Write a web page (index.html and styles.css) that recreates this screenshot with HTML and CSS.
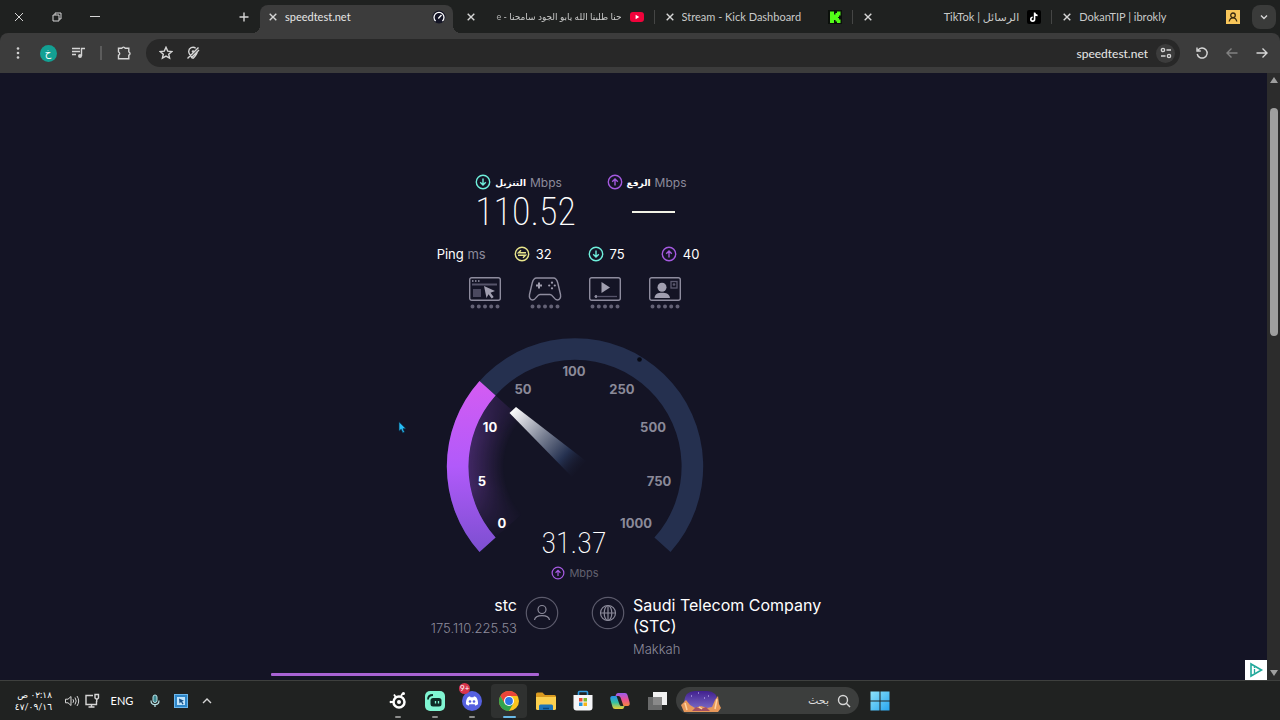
FILE: index.html
```html
<!DOCTYPE html>
<html lang="ar">
<head>
<meta charset="utf-8">
<title>speedtest.net</title>
<link rel="stylesheet" href="styles.css">
</head>
<body>
<header class="tabstrip">
  <div class="window-controls">
    <button class="win-btn" aria-label="Close"><svg width="10" height="10" viewBox="0 0 10 10"><path class="ln" d="M1 1l8 8M9 1l-8 8"/></svg></button>
    <button class="win-btn" aria-label="Restore"><svg width="10" height="10" viewBox="0 0 10 10"><path class="ln" d="M1 3h6v6H1zM3 3V1h6v6H7"/></svg></button>
    <button class="win-btn" aria-label="Minimize"><svg width="10" height="10" viewBox="0 0 10 10"><path class="ln" d="M0 4.500h10"/></svg></button>
    <button class="new-tab" aria-label="New tab"><svg width="10" height="10" viewBox="0 0 10 10"><path class="ln bold" d="M5 .5v9M.5 5h9"/></svg></button>
  </div>
  <nav class="tabs">
    <div class="tab active"><button class="close" aria-label="Close tab"><svg width="8" height="8" viewBox="0 0 8 8"><path class="ln bold" d="M.7.7l6.600 6.600M7.300.7L.7 7.300"/></svg></button><span class="title">speedtest.net</span>
      <svg width="14" height="14" viewBox="0 0 14 14"><circle cx="7" cy="7" r="6.500" fill="#141526"/><path d="M3.600 11A5 5 0 1 1 10.400 11" fill="none" stroke="#fff" stroke-width="1.300"/><path d="M6.300 8.500L9.500 5" stroke="#fff" stroke-width="1.300"/></svg></div>
    <div class="tab"><button class="close" aria-label="Close tab"><svg width="8" height="8" viewBox="0 0 8 8"><path class="ln bold" d="M.7.7l6.600 6.600M7.300.7L.7 7.300"/></svg></button><span class="title fade" dir="rtl">حنا طلبنا الله يابو الجود سامحنا - e</span>
      <svg width="14" height="14" viewBox="0 0 14 14"><rect y="2" width="14" height="10" rx="3" fill="#f0033b"/><path d="M5.600 4.800L9.300 7 5.600 9.200z" fill="#fff"/></svg></div>
    <div class="tab"><button class="close" aria-label="Close tab"><svg width="8" height="8" viewBox="0 0 8 8"><path class="ln bold" d="M.7.7l6.600 6.600M7.300.7L.7 7.300"/></svg></button><span class="title">Stream - Kick Dashboard</span>
      <svg width="14" height="14" viewBox="0 0 14 14"><rect width="14" height="14" fill="#0b100b"/><path d="M2 1.500h4v3h1.500V3H9V1.500h3.500v4H11V7h-1v1h1v1.500h1.500v3.500H9v-1.500H7.500V10H6v3H2z" fill="#53fc18"/></svg></div>
    <div class="tab"><button class="close" aria-label="Close tab"><svg width="8" height="8" viewBox="0 0 8 8"><path class="ln bold" d="M.7.7l6.600 6.600M7.300.7L.7 7.300"/></svg></button><span class="title" dir="rtl">الرسائل | TikTok</span>
      <svg width="14" height="14" viewBox="0 0 14 14"><rect width="14" height="14" rx="2" fill="#000"/><path d="M7.600 2.500v6.700a1.900 1.900 0 1 1-1.900-1.900M7.600 3c.3 1.500 1.400 2.400 3 2.500" fill="none" stroke="#fff" stroke-width="1.600"/></svg></div>
    <div class="tab"><button class="close" aria-label="Close tab"><svg width="8" height="8" viewBox="0 0 8 8"><path class="ln bold" d="M.7.7l6.600 6.600M7.300.7L.7 7.300"/></svg></button><span class="title">DokanTIP | ibrokly</span>
      <svg width="14" height="14" viewBox="0 0 14 14"><rect width="14" height="14" fill="#f8c65a"/><circle cx="7" cy="5.300" r="2.300" fill="none" stroke="#3a2a10" stroke-width="1.300"/><path d="M3.200 11.500c.5-2.600 1.800-3.700 3.800-3.700s3.300 1.100 3.800 3.700" fill="none" stroke="#3a2a10" stroke-width="1.300"/></svg></div>
  </nav>
  <button class="tab-search" aria-label="Search tabs"><svg width="10" height="10" viewBox="0 0 10 10"><path class="ln bold" d="M2 3.500l3 3 3-3"/></svg></button>
</header>

<div class="toolbar">
  <div class="tool-group">
    <button class="tool" aria-label="Menu"><svg width="16" height="16" viewBox="0 0 16 16" fill="#d0d0d0"><circle cx="8" cy="3.500" r="1.300"/><circle cx="8" cy="8" r="1.300"/><circle cx="8" cy="12.500" r="1.300"/></svg></button>
    <button class="tool" aria-label="Profile"><span class="avatar">خ</span></button>
    <button class="tool" aria-label="Media"><svg width="16" height="16" viewBox="0 0 16 16"><path class="ln bold" d="M2 3.500h8M2 6.500h8M2 9.500h4M11.500 11V3.500H15"/><circle cx="10" cy="11" r="2" fill="#cfcfcf"/></svg></button>
    <span class="divider"></span>
    <button class="tool" aria-label="Extensions"><svg width="16" height="16" viewBox="0 0 16 16"><path class="ln bold" d="M2.500 3.300h3.300a1.800 1.800 0 0 1 3.400 0h3.600v3.500a1.800 1.800 0 0 1 0 3.400v3.500H2.500v-3.500a1.800 1.800 0 0 0 0-3.400z"/></svg></button>
  </div>
  <div class="omnibox">
    <button class="mini" aria-label="Bookmark"><svg width="14" height="14" viewBox="0 0 14 14"><path class="ln bold" d="M7 1.300l1.700 3.800 4.100.4-3.100 2.700.9 4L7 10.100l-3.600 2.100.9-4L1.200 5.500l4.100-.4z"/></svg></button>
    <button class="mini" aria-label="Location blocked"><svg width="14" height="14" viewBox="0 0 14 14"><path class="ln bold" d="M7 12.500C4 9.500 2.700 7.500 2.700 5.500a4.300 4.300 0 0 1 7-3.300M11.300 5c.2 2.300-1.500 4.800-4.300 7.500M12.500 1.500l-11 11M13 4l-8 8"/><circle cx="7" cy="5.500" r="1.300" fill="#cfcfcf"/></svg></button>
    <input class="address" type="text" value="speedtest.net" aria-label="Address">
    <button class="site-info" aria-label="Site settings"><svg width="12" height="12" viewBox="0 0 12 12"><circle class="ln bold" cx="3" cy="3" r="1.600"/><circle class="ln bold" cx="9" cy="9" r="1.600"/><path class="ln bold" d="M6.500 3H11M1 9h4.500"/></svg></button>
  </div>
  <div class="tool-group">
    <button class="tool" aria-label="Reload"><svg width="14" height="14" viewBox="0 0 14 14"><path class="ln bold" d="M3 4.200A5 5 0 1 1 2.200 8M2 1.500v3.500h3.800"/></svg></button>
    <button class="tool dim" aria-label="Forward"><svg width="14" height="14" viewBox="0 0 14 14"><path class="ln bold" d="M12.500 7H2M6.500 2.500L2 7l4.500 4.500"/></svg></button>
    <button class="tool" aria-label="Back"><svg width="14" height="14" viewBox="0 0 14 14"><path class="ln bold" d="M1.500 7H12M7.500 2.500L12 7l-4.500 4.500"/></svg></button>
  </div>
</div>

<div class="viewport">
  <main class="speedtest">
    <section class="results">
      <div class="result">
        <h2 class="result-label"><svg class="c-down" width="16" height="16" viewBox="0 0 16 16"><circle cx="8" cy="8" r="6.700"/><path d="M8 4.500v6.500M5.200 8.300L8 11l2.800-2.700"/></svg><b>التنزيل</b><span class="unit">Mbps</span></h2>
        <div class="result-value">110.52</div>
      </div>
      <div class="result">
        <h2 class="result-label"><svg class="c-up" width="16" height="16" viewBox="0 0 16 16"><circle cx="8" cy="8" r="6.700"/><path d="M8 11.500V5M5.200 7.700L8 5l2.800 2.700"/></svg><b>الرفع</b><span class="unit">Mbps</span></h2>
        <div class="result-value"><span class="dash"></span></div>
      </div>
    </section>
    <section class="pings">
      <span class="ping-title">Ping <span class="unit">ms</span></span>
      <span class="ping"><svg class="c-idle" width="16" height="16" viewBox="0 0 16 16"><circle cx="8" cy="8" r="6.700"/><path d="M12 6.700H4.500L7 4.300M4 9.300h7.500L9 11.700"/></svg>32</span>
      <span class="ping"><svg class="c-down" width="16" height="16" viewBox="0 0 16 16"><circle cx="8" cy="8" r="6.700"/><path d="M8 4.500v6.500M5.200 8.300L8 11l2.800-2.700"/></svg>75</span>
      <span class="ping"><svg class="c-up" width="16" height="16" viewBox="0 0 16 16"><circle cx="8" cy="8" r="6.700"/><path d="M8 11.500V5M5.200 7.700L8 5l2.800 2.700"/></svg>40</span>
    </section>
    <section class="qualities">
      <svg class="quality" viewBox="0 0 34 34"><rect class="ol" x="1.700" y="1.700" width="30.600" height="22.600" rx="2"/><path d="M4 5h1.500M7 5h1.500M10 5h1.500" stroke="#9a98aa" stroke-width="1.500"/><path d="M4 8.500h25" stroke="#56546a" stroke-width="2"/><rect x="5" y="13" width="8" height="8" fill="#4b495f"/><path d="M16 10l11 5-4.500 1.700 3.200 4.200-2 1.500-3.200-4.200L18.500 22z" fill="#a19fb0"/><path class="dots" d="M4.500 30.500h.01M10.800 30.500h.01M17 30.500h.01M23.200 30.500h.01M29.500 30.500h.01"/></svg>
      <svg class="quality" viewBox="0 0 34 34"><path class="ol" d="M8.500 2h17c2.500 0 3.500 2 4.300 5l2.700 11.500c.6 3-.8 5.500-3.200 5.500-3.300 0-4.300-5.500-7.300-5.500H12c-3 0-4 5.500-7.300 5.500-2.400 0-3.800-2.500-3.200-5.500L4.200 7c.8-3 1.800-5 4.300-5z"/><path d="M11 6.500v6M8 9.500h6" stroke="#a19fb0" stroke-width="2"/><g fill="#a19fb0"><circle cx="24" cy="6.700" r="1.100"/><circle cx="24" cy="12.300" r="1.100"/><circle cx="21.200" cy="9.500" r="1.100"/><circle cx="26.800" cy="9.500" r="1.100"/></g><path class="dots" d="M4.500 30.500h.01M10.800 30.500h.01M17 30.500h.01M23.200 30.500h.01M29.500 30.500h.01"/></svg>
      <svg class="quality" viewBox="0 0 34 34"><rect class="ol" x="1.700" y="1.700" width="30.600" height="22.600" rx="2"/><path d="M13.500 6v11l8.500-5.500z" fill="#a19fb0"/><path d="M6 20.500h23" stroke="#56546a" stroke-width="1.300"/><path d="M8 19v3" stroke="#a19fb0" stroke-width="1.500"/><path class="dots" d="M4.500 30.500h.01M10.800 30.500h.01M17 30.500h.01M23.200 30.500h.01M29.500 30.500h.01"/></svg>
      <svg class="quality" viewBox="0 0 34 34"><rect class="ol" x="1.700" y="1.700" width="30.600" height="22.600" rx="2"/><circle cx="14" cy="11.300" r="4.500" fill="#a19fb0"/><path d="M6.500 22c.3-4 3.500-5.200 7.500-5.200s7.500 1.200 8 5.200z" fill="#a19fb0"/><rect x="23" y="5.500" width="6" height="6.500" fill="none" stroke="#5b596f" stroke-width="1.300"/><circle cx="26" cy="8.500" r="1.300" fill="#5b596f"/><path class="dots" d="M4.500 30.500h.01M10.800 30.500h.01M17 30.500h.01M23.200 30.500h.01M29.500 30.500h.01"/></svg>
    </section>
    <svg class="gauge" viewBox="0 0 260 220" role="img" aria-label="Upload speed">
      <defs>
        <linearGradient id="fill" x1="0" y1="0" x2="0" y2="1"><stop offset="0" stop-color="#d45cf2"/><stop offset=".5" stop-color="#b15afa"/><stop offset="1" stop-color="#7c4fd0"/></linearGradient>
        <linearGradient id="needle" gradientUnits="userSpaceOnUse" x1="67" y1="72" x2="137" y2="134"><stop offset="0" stop-color="#fff"/><stop offset=".12" stop-color="#dedee4"/><stop offset=".45" stop-color="#777e91"/><stop offset=".75" stop-color="#253150"/><stop offset="1" stop-color="#141526" stop-opacity="0"/></linearGradient>
        <radialGradient id="glow" gradientUnits="userSpaceOnUse" cx="130" cy="129.500" r="107"><stop offset=".66" stop-color="#9a4fe0" stop-opacity="0"/><stop offset="1" stop-color="#9a4fe0" stop-opacity=".34"/></radialGradient>
        <linearGradient id="glow-fade" x1="0" y1="0" x2="0" y2="1"><stop offset="0" stop-color="#fff" stop-opacity=".5"/><stop offset=".3" stop-color="#fff"/><stop offset=".65" stop-color="#fff"/><stop offset="1" stop-color="#fff" stop-opacity="0"/></linearGradient>
        <mask id="glow-mask"><rect x="20" y="58" width="112" height="143" fill="url(#glow-fade)"/></mask>
      </defs>
      <path d="M34.500 215A128.200 128.200 0 1 1 225.500 215L209.400 200.600A106.600 106.600 0 1 0 50.600 200.600Z" fill="#25304f"/>
      <path d="M130 129.500L50.600 58.500A106.600 106.600 0 0 0 50.600 200.600Z" fill="url(#glow)" mask="url(#glow-mask)"/>
      <path d="M34.500 215A128.200 128.200 0 0 1 34.500 44L50.600 58.500A106.600 106.600 0 0 0 50.600 200.600Z" fill="url(#fill)"/>
      <path d="M64.500 76L71 70L141 124L127 140Z" fill="url(#needle)"/>
      <circle cx="194.500" cy="22.500" r="2.300" fill="#080a14"/>
      <g class="ticks"><g class="on"><text x="57" y="191">0</text><text x="37" y="149">5</text><text x="45" y="95">10</text></g>
      <text x="78" y="57">50</text><text x="129" y="39">100</text><text x="177" y="57">250</text><text x="208" y="95">500</text><text x="214" y="149">750</text><text x="191" y="191">1000</text></g>
      <text class="speed" x="129" y="216">31.37</text>
    </svg>
    <div class="gauge-unit"><svg class="c-up" width="14" height="14" viewBox="0 0 16 16"><circle cx="8" cy="8" r="6.700"/><path d="M8 11.500V5M5.200 7.700L8 5l2.800 2.700"/></svg>Mbps</div>
    <section class="parties">
      <div class="party client"><div><div class="party-name">stc</div><div class="party-detail">175.110.225.53</div></div>
        <svg class="party-icon" viewBox="0 0 34 34"><circle cx="17" cy="17" r="15.700"/><g class="in"><circle cx="17" cy="13.500" r="4"/><path d="M9.500 24c.5-3.500 3.500-4.300 7.500-4.300s7 .8 7.500 4.300"/></g></svg></div>
      <div class="party"><svg class="party-icon" viewBox="0 0 34 34"><circle cx="17" cy="17" r="15.700"/><g class="in"><circle cx="17" cy="17" r="7.500"/><ellipse cx="17" cy="17" rx="3.800" ry="7.500"/><path d="M17 9.500v15M9.500 17h15"/></g></svg>
        <div><div class="party-name">Saudi Telecom Company (STC)</div><div class="party-detail">Makkah</div></div></div>
    </section>
    <div class="progress"><div class="progress-fill" style="width:44%"></div></div>
    <svg class="cursor" width="9" height="13" viewBox="0 0 9 13"><path d="M1 .8v9.400l2.200-1.900 1.600 3.600 1.700-.8-1.500-3.400H8z" fill="#27bdf5" stroke="#0a2b45" stroke-width=".7"/></svg>
    <a class="adchoices" href="#" aria-label="AdChoices"><svg width="16" height="16" viewBox="0 0 16 16"><path d="M3 2v12l10.500-6z" fill="none" stroke="#20a99b" stroke-width="1.600"/><path d="M6.500 7v4M6.500 4.800v1.200" stroke="#20a99b" stroke-width="1.300"/></svg></a>
  </main>
  <div class="scrollbar"><span class="arrow up"></span><span class="thumb"></span><span class="arrow down"></span></div>
</div>

<footer class="taskbar">
  <div class="tray">
    <div class="clock" dir="rtl"><div>٠٢:١٨ ص</div><div>٤٧/٠٩/١٦</div></div>
    <button class="tray-btn" aria-label="Volume"><svg width="16" height="16" viewBox="0 0 16 16"><path class="ln" d="M1.500 6.200H4L7 3.500v9L4 9.800H1.500zM9 6.200q1.200 1.800 0 3.600M11 4.500q2.400 3.500 0 7M13 3q3.400 5 0 10"/></svg></button>
    <button class="tray-btn" aria-label="Network"><svg width="16" height="16" viewBox="0 0 16 16"><path class="ln bold" d="M9 2.500H2v9h10.500V8M4.500 14h6M7.500 11.500V14M11 1.500h3.500V5l-1.700 1.500L11 5zM12.700 6.500V9"/></svg></button>
    <button class="lang">ENG</button>
    <button class="tray-btn wide" aria-label="Microphone"><svg width="14" height="14" viewBox="0 0 14 14"><rect x="5" y="1" width="4" height="7.500" rx="2" fill="#3c8790" stroke="#b9e2e6"/><path d="M3 6.500c0 5.500 8 5.500 8 0M7 10.700V13" fill="none" stroke="#b9e2e6" stroke-width="1.200"/></svg></button>
    <button class="tray-btn wide" aria-label="Pointer tool"><svg width="14" height="14" viewBox="0 0 14 14"><rect x=".5" y=".5" width="13" height="13" fill="#2e86c8" stroke="#6cb8ee"/><rect x="3" y="3" width="8" height="8" fill="#bfe3fb"/><path d="M5 4.500l5 2.300-2 .6 1.600 2.300-1.100.7-1.500-2.300L5.500 9.500z" fill="#164f86"/></svg></button>
    <button class="tray-btn wide" aria-label="Show hidden icons"><svg width="10" height="10" viewBox="0 0 10 10"><path class="ln bold" d="M1 7l4-4 4 4"/></svg></button>
  </div>
  <div class="apps">
    <button class="app running" aria-label="SteelSeries"><svg viewBox="0 0 22 22"><circle cx="12" cy="12" r="5.500" fill="none" stroke="#fff" stroke-width="2.500"/><circle cx="12" cy="12" r="2" fill="#fff"/><path d="M3 12h3M7 4.500l2 3M14 6l2-3" stroke="#fff" stroke-width="1.800"/><circle cx="16.500" cy="3.500" r="1.500" fill="#fff"/><circle cx="3.800" cy="12" r="1.200" fill="#fff"/></svg></button>
    <button class="app running" aria-label="Streamlabs"><svg viewBox="0 0 22 22"><rect x="1" y="1" width="20" height="20" rx="5" fill="#80f5d2"/><path d="M4 9.500c0-3 2-4.500 5-4.500" fill="none" stroke="#0e2b25" stroke-width="1.800"/><rect x="6.500" y="8" width="11" height="8.500" rx="2.500" fill="#0e2b25"/><path d="M11.500 11v2.500M14.500 11v2.500" stroke="#80f5d2" stroke-width="1.300"/></svg></button>
    <button class="app running" aria-label="Discord"><svg viewBox="0 0 22 22"><circle cx="11" cy="11" r="10" fill="#5560df"/><path d="M7 7l2-.7.6 1h2.800l.6-1 2 .7c1.500 2 2.300 4.500 2 7.300l-2.600 1.400-.8-1.400H8.400l-.8 1.400L5 14.300C4.700 11.500 5.500 9 7 7z" fill="#fff"/><circle cx="9" cy="11.500" r="1.300" fill="#5560df"/><circle cx="13" cy="11.500" r="1.300" fill="#5560df"/></svg><span class="badge">9+</span></button>
    <button class="app running current" aria-label="Chrome"><svg viewBox="0 0 22 22"><circle cx="11" cy="11" r="10" fill="#fbc51d"/><path d="M11 6h8.660A10 10 0 0 0 2.340 6l4.300 7.500z" fill="#e9443a"/><path d="M2.340 6A10 10 0 0 0 11 21l4.330-7.500-8.600 0z" fill="#31a350"/><circle cx="11" cy="11" r="5" fill="#fff"/><circle cx="11" cy="11" r="3.900" fill="#2e75e6"/></svg></button>
    <button class="app" aria-label="File Explorer"><svg viewBox="0 0 22 22"><path d="M1 4q0-1.500 1.500-1.500h5L10 5h9.500Q21 5 21 6.500V17H1z" fill="#d99a20"/><path d="M1 7h20v11.500q0 1.500-1.500 1.500h-17Q1 20 1 18.500z" fill="#fbd04f"/><path d="M4 20v-4q0-1.500 1.500-1.500h11q1.500 0 1.500 1.500v4z" fill="#1c73b8"/><path d="M8 18.500h6" stroke="#09477c" stroke-width="1.500"/></svg></button>
    <button class="app" aria-label="Microsoft Store"><svg viewBox="0 0 22 22"><path d="M6.500 6V2.500q0-1 1-1h7q1 0 1 1V6" fill="none" stroke="#2e9be0" stroke-width="1.600"/><path d="M1.500 5h19v12.500q0 3-3 3h-13q-3 0-3-3z" fill="#f5f6f8"/><path fill="#e94b35" d="M7 8h3.500v3.500H7z"/><path fill="#7db72c" d="M11.500 8H15v3.500h-3.500z"/><path fill="#2293dc" d="M7 12.500h3.500V16H7z"/><path fill="#f6b519" d="M11.500 12.500H15V16h-3.500z"/></svg></button>
    <button class="app" aria-label="Copilot"><svg viewBox="0 0 22 22"><defs><linearGradient id="cp1" x1="0" y1="0" x2="0" y2="1"><stop offset="0" stop-color="#2a8ff0"/><stop offset=".5" stop-color="#36c2a0"/><stop offset="1" stop-color="#f0d032"/></linearGradient><linearGradient id="cp2" x1="0" y1="0" x2="0" y2="1"><stop offset="0" stop-color="#9a5cf0"/><stop offset=".5" stop-color="#ea5094"/><stop offset="1" stop-color="#f5873d"/></linearGradient></defs><g transform="matrix(-1 0 0 1 22 0)"><path d="M6 3h7q1.500 0 2 1.500l.5 1.500h-3q-1.500 0-2 1.500L7.500 16H3.500Q.5 16 1.500 12L3.500 5Q4 3 6 3z" fill="url(#cp2)"/><path d="M16 19H9q-1.500 0-2-1.500L6.500 16h3q1.500 0 2-1.500L14.500 6h4q3 0 2 4l-2 7q-.5 2-2.500 2z" fill="url(#cp1)"/></g></svg></button>
    <button class="app" aria-label="Task view"><svg viewBox="0 0 22 22"><rect x="7" y="2" width="14" height="13" fill="#f2f2f2"/><rect x="2" y="7" width="14" height="13" fill="#777" opacity=".85"/></svg></button>
    <label class="search">
      <svg class="art" width="42" height="22" viewBox="0 0 42 22"><defs><linearGradient id="sky" x1="0" y1="0" x2="0" y2="1"><stop offset="0" stop-color="#41208f"/><stop offset="1" stop-color="#8173cb"/></linearGradient></defs><path d="M4 12Q5 1 15 1h12q10 0 11 11l-2 9H7z" fill="url(#sky)"/><path d="M1 15l5-5 4 5 5 3 6-2 6 2 5-1 3-7 3-4 1 8 2 4-3 4q-15 2-34 0z" fill="#e7985a"/><path d="M12 21l4-4 5 2 5-2 4 4z" fill="#a34f62"/><path d="M5 13l2 7M37 9l-2 10M19 17l3 2" stroke="#ffd3a0" stroke-width="1.500"/><path d="M11 6h1M18 3h1M28 6h1M24 8h1" stroke="#d5c6ff"/></svg>
      <input type="text" dir="rtl" placeholder="بحث" aria-label="بحث">
      <svg width="14" height="14" viewBox="0 0 14 14"><circle class="ln bold" cx="6" cy="6" r="4.500"/><path class="ln bold" d="M9.300 9.300L13 13"/></svg>
    </label>
    <button class="app start" aria-label="Start"><svg viewBox="0 0 22 22"><defs><linearGradient id="wn" x1="0" y1="0" x2="1" y2="1"><stop offset="0" stop-color="#8ee3fb"/><stop offset="1" stop-color="#27a5ee"/></linearGradient></defs><path d="M1.500 1.500h9v9h-9zM11.500 1.500h9v9h-9zM1.500 11.500h9v9h-9zM11.500 11.500h9v9h-9z" fill="url(#wn)"/></svg></button>
  </div>
</footer>
</body>
</html>
```

FILE: styles.css
```css
* { box-sizing: border-box; }
body {
  margin: 0;
  height: 100vh;
  display: flex;
  flex-direction: column;
  overflow: hidden;
  background: #1f2120;
  color: #fff;
  font-family: Lato, "Noto Sans", "DejaVu Sans", sans-serif;
  font-size: 11px;
}
button {
  display: flex;
  align-items: center;
  justify-content: center;
  flex: none;
  padding: 0;
  border: 0;
  background: none;
  color: inherit;
  font: inherit;
}
svg { flex: none; display: block; }
.ln { fill: none; stroke: #d6d6d6; stroke-width: 1; }
.bold { stroke-width: 1.4; }

/* Tab strip */
.tabstrip { display: flex; height: 33px; flex: none; padding-right: 4px; align-items: stretch; }
.window-controls { display: flex; width: 258px; flex: none; }
.win-btn { width: 38px; }
.new-tab { width: 28px; margin-left: auto; }
.tabs { display: flex; flex: 1; min-width: 0; padding-top: 5px; }
.tab {
  position: relative;
  display: flex;
  flex: 1;
  min-width: 0;
  align-items: center;
  gap: 8px;
  padding: 0 12px 4px 10px;
  color: #c9cac9;
}
.tab:not(.active):not(:last-child)::after {
  content: "";
  position: absolute;
  right: 1px;
  top: 5px;
  width: 1px;
  height: 14px;
  background: #454645;
}
.tab.active { background: #3c3c3c; border-radius: 8px 8px 0 0; color: #e6e6e6; margin-right: 4px; margin-left: 2px; padding: 0 7px 4px 9px; }
.tab.active::before,
.tab.active::after {
  content: "";
  position: absolute;
  bottom: 0;
  width: 8px;
  height: 8px;
}
.tab.active::before { left: -8px; background: radial-gradient(circle at 0 0, transparent 8px, #3c3c3c 8px); }
.tab.active::after { right: -8px; background: radial-gradient(circle at 100% 0, transparent 8px, #3c3c3c 8px); }
.title { flex: 1; min-width: 0; overflow: hidden; white-space: nowrap; line-height: 18px; }
.fade { font-size: 9px; mask-image: linear-gradient(to right, rgba(0, 0, 0, .2), #000 20px); }
.tab-search { width: 24px; height: 24px; margin-top: 5px; border-radius: 8px; background: #3a3b3a; }

/* Toolbar */
.toolbar { display: flex; align-items: center; gap: 7px; flex: none; height: 40px; padding: 0 3px; background: #3c3c3c; border-radius: 8px 8px 0 0; }
.tool-group { display: flex; align-items: center; }
.tool { width: 30px; height: 28px; }
.dim { opacity: .45; }
.divider { width: 2px; height: 14px; margin: 0 7px; background: #5c5c5c; }
.avatar { width: 17px; height: 17px; border-radius: 50%; background: #13a093; font-size: 10px; line-height: 14px; }
.omnibox { display: flex; align-items: center; flex: 1; min-width: 0; height: 28px; padding: 0 5px 0 6px; border-radius: 14px; background: #282828; }
.mini { width: 27px; height: 24px; }
.address { flex: 1; min-width: 0; border: 0; padding: 0 8px; background: none; color: #e8e8e8; font: 12px Lato, sans-serif; text-align: right; }
.site-info { width: 19px; height: 19px; border-radius: 50%; background: #3c3c3c; }

/* Page */
.viewport { display: flex; flex: 1; min-height: 0; background: #141425; }
.speedtest {
  position: relative;
  display: flex;
  flex: 1;
  flex-direction: column;
  align-items: center;
  min-width: 0;
  padding: 100px 117px 4px 0;
  font-family: Inter, "DejaVu Sans", sans-serif;
}
.c-down, .c-up, .c-idle { fill: none; stroke-width: 1.4; }
.c-down { stroke: #6ff0dc; }
.c-up { stroke: #a55ae0; }
.c-idle { stroke: #e8e58c; }
.unit { color: #8c8b9b; font-weight: 400; }
.results { display: grid; grid-template-columns: 116px 116px; gap: 12px; padding-left: 15px; }
.result-label { display: flex; align-items: center; justify-content: center; gap: 4px; height: 18px; margin: 0; font-size: 12px; font-weight: 400; }
.result-label b { font-size: 9px; }
.result-value {
  display: flex;
  align-items: center;
  justify-content: center;
  height: 42px;
  padding-left: 14px;
  font-family: "Roboto Condensed", Roboto, sans-serif;
  font-size: 38px;
  font-weight: 200;
}
.dash { width: 43px; height: 2px; background: #f2f2e6; }
.pings { display: flex; align-items: center; gap: 36px; height: 20px; margin-top: 11px; padding-right: 14px; font-size: 13px; }
.ping-title { margin-right: -8px; }
.ping { display: flex; align-items: center; gap: 6px; }
.qualities { display: flex; gap: 26px; margin-top: 12px; }
.quality { width: 34px; height: 34px; }
.ol { fill: none; stroke: #8e8c9e; stroke-width: 1.4; }
.dots { fill: none; stroke: #636175; stroke-width: 4; stroke-linecap: round; }
.gauge { width: 260px; height: 220px; margin-top: 27px; overflow: visible; }
.ticks text { fill: #8b8a99; font-size: 13px; font-weight: 700; text-anchor: middle; }
.ticks .on text { fill: #fff; }
.speed { fill: #fff; font-family: "Roboto Condensed", Roboto, sans-serif; font-size: 30px; font-weight: 200; text-anchor: middle; }
.gauge-unit { display: flex; align-items: center; gap: 4px; height: 16px; margin-top: 8px; color: #62616f; }
.parties { display: grid; grid-template-columns: 1fr 1fr; gap: 32px; width: 520px; margin-top: 14px; }
.party { display: flex; gap: 8px; padding-right: 10px; }
.client { justify-content: flex-end; padding-right: 0; text-align: right; }
.party-icon { width: 34px; height: 34px; margin-top: 1px; fill: none; stroke: #5b5a6b; stroke-width: 1.2; }
.in { stroke: #8b8a9a; }
.party-name { font-size: 16px; line-height: 21px; }
.party-detail { margin-top: 2px; color: #8d8c9c; font-size: 13px; line-height: 20px; font-weight: 300; }
.progress { width: 608px; max-width: 100%; height: 3px; margin-top: auto; }
.progress-fill { height: 3px; background: #a963d4; border-radius: 1px; }
.cursor { position: absolute; left: 398px; top: 348px; }
.adchoices { position: absolute; right: 0; bottom: 0; display: flex; align-items: center; justify-content: center; width: 22px; height: 20px; background: #fff; }
.scrollbar { display: flex; flex-direction: column; align-items: center; width: 13px; flex: none; padding: 4px 0; background: #2c2c2c; }
.arrow { border: 4px solid transparent; }
.up { border-top: 0; border-bottom: 6px solid #9f9f9f; }
.down { border-bottom: 0; border-top: 6px solid #9f9f9f; margin-top: auto; }
.thumb { width: 8px; height: 38%; margin-top: 25px; border-radius: 4px; background: #9f9f9f; }

/* Taskbar */
.taskbar { display: grid; grid-template-columns: 1fr auto 1fr; flex: none; height: 40px; border-top: 1px solid #3e403e; background: #202221; }
.tray { display: flex; align-items: center; padding-left: 12px; }
.clock { width: 40px; margin-right: 10px; font-size: 9px; line-height: 12px; white-space: nowrap; }
.tray-btn { width: 20px; height: 28px; }
.lang { width: 40px; font-size: 11px; }
.wide { width: 26px; }
.apps { display: flex; align-items: center; gap: 1px; padding-right: 2px; }
.app { position: relative; width: 36px; height: 34px; border-radius: 4px; }
.app svg { width: 22px; height: 22px; }
.running::after { content: ""; position: absolute; bottom: 0; width: 6px; height: 2px; border-radius: 1px; background: #8d8e8d; }
.current { background: #2f3130; }
.current::after { width: 13px; background: #69b9e8; }
.badge { position: absolute; left: 5px; top: -1px; padding: 0 1px; border-radius: 6px; background: #d8344c; font-size: 8px; line-height: 11px; }
.search { display: flex; align-items: center; width: 183px; height: 27px; padding: 0 8px 0 4px; border-radius: 14px; background: #3c3e3d; }
.search input { flex: 1; min-width: 0; border: 0; padding: 0 8px; background: none; color: #ddd; font: 11px "DejaVu Sans", sans-serif; }
.search input::placeholder { color: #ddd; }
.start { margin-left: 2px; }
```
